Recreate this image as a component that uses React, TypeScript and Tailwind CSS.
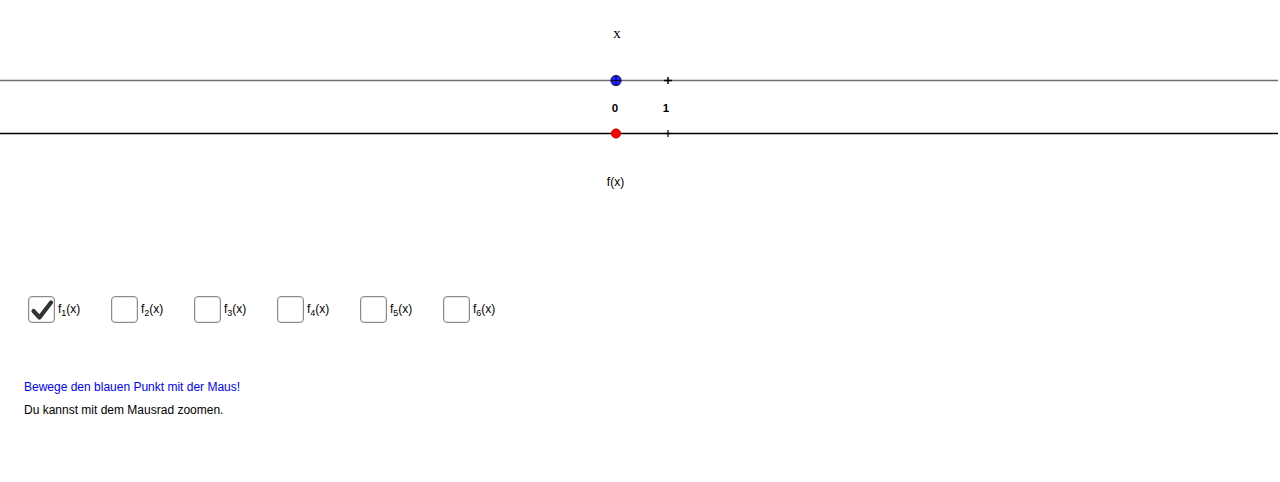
import React from "react";

function Check() {
  return (
    <svg width="24" height="24" viewBox="0 0 24 24" className="block">
      <path d="M3.5 13 L9.5 19.5 L21 4.5" fill="none" stroke="#333333" strokeWidth="4.2" strokeLinecap="round" strokeLinejoin="round" />
    </svg>
  );
}

function Item({ n, checked }: { n: number; checked?: boolean }) {
  return (
    <div className="flex items-center w-[83px] shrink-0">
      <div className="w-[27px] h-[27px] rounded-[4px] border border-[#8a8a8a] bg-white flex items-center justify-center shadow-[inset_0_0_0_1px_#e6e6e6]">
        {checked ? <Check /> : null}
      </div>
      <span className="ml-[3px] text-[12px] text-black leading-none relative -top-[1px]" style={{ fontFamily: '"Liberation Sans", Arial, sans-serif' }}>
        f<span className="text-[9px] relative top-[3px]">{n}</span>(x)
      </span>
    </div>
  );
}

export default function App() {
  const sans = '"Liberation Sans", Arial, sans-serif';
  return (
    <div className="w-[1280px] h-[482px] bg-white overflow-hidden" style={{ fontFamily: sans }}>
      <svg width="1280" height="200" className="block">
        <text x="617" y="38" textAnchor="middle" fontFamily='"Liberation Serif", serif' fontSize="15" fill="#000">x</text>
        <line x1="0" y1="80.5" x2="1278" y2="80.5" stroke="#6e6e6e" strokeWidth="1.6" />
        <line x1="0" y1="133.5" x2="1278" y2="133.5" stroke="#000" strokeWidth="1.3" />
        <line x1="664" y1="80.5" x2="672" y2="80.5" stroke="#000" strokeWidth="1.5" />
        <line x1="668" y1="77" x2="668" y2="84" stroke="#000" strokeWidth="1.5" />
        <line x1="664" y1="133.5" x2="672" y2="133.5" stroke="#000" strokeWidth="1.2" />
        <line x1="668" y1="130" x2="668" y2="137" stroke="#000" strokeWidth="1.2" />
        <circle cx="616" cy="80.5" r="5.2" fill="#1f1fff" stroke="#000" strokeWidth="0.7" />
        <line x1="611.5" y1="80.5" x2="620.5" y2="80.5" stroke="#000" strokeWidth="0.8" />
        <line x1="616" y1="76" x2="616" y2="85" stroke="#000" strokeWidth="0.8" />
        <circle cx="616" cy="133.5" r="4.7" fill="#ff0000" stroke="#a00000" strokeWidth="0.6" />
        <text x="615" y="112" textAnchor="middle" fontFamily={sans} fontSize="11.5" fontWeight="bold" fill="#000">0</text>
        <text x="666" y="112" textAnchor="middle" fontFamily={sans} fontSize="11.5" fontWeight="bold" fill="#000">1</text>
        <text x="615.5" y="186" textAnchor="middle" fontFamily={sans} fontSize="12" fill="#000">f(x)</text>
      </svg>
      <div className="flex pl-[28px] mt-[96px]">
        <Item n={1} checked />
        <Item n={2} />
        <Item n={3} />
        <Item n={4} />
        <Item n={5} />
        <Item n={6} />
      </div>
      <div className="pl-[24px] mt-[57px] text-[12px] leading-[14px]">
        <div className="text-[#0000ff]">Bewege den blauen Punkt mit der Maus!</div>
        <div className="text-black mt-[9px]">Du kannst mit dem Mausrad zoomen.</div>
      </div>
    </div>
  );
}
